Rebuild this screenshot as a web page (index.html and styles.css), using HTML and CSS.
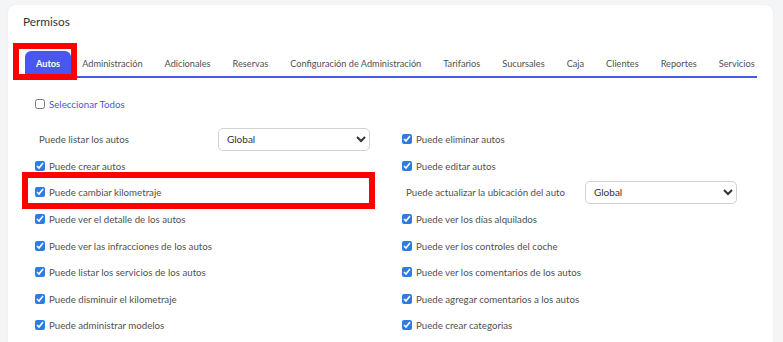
FILE: index.html
```html
<!DOCTYPE html>
<html lang="es">
<head>
    <meta charset="UTF-8">
    <title>Permisos</title>
    <link rel="stylesheet" href="styles.css">
</head>
<body>
    <div class="card">
        <h2 class="card-title">Permisos</h2>
        <ul class="tabs">
            <li class="tab active">Autos</li>
            <li class="tab">Administración</li>
            <li class="tab">Adicionales</li>
            <li class="tab">Reservas</li>
            <li class="tab">Configuración de Administración</li>
            <li class="tab">Tarifarios</li>
            <li class="tab">Sucursales</li>
            <li class="tab">Caja</li>
            <li class="tab">Clientes</li>
            <li class="tab">Reportes</li>
            <li class="tab">Servicios</li>
        </ul>

        <div class="tab-content">
            <label class="check select-all"><input type="checkbox"><span>Seleccionar Todos</span></label>

            <div class="perm-grid">
                <div class="perm select-row">
                    <span class="perm-label">Puede listar los autos</span>
                    <select><option>Global</option></select>
                </div>
                <label class="perm check"><input type="checkbox" checked><span>Puede eliminar autos</span></label>

                <label class="perm check"><input type="checkbox" checked><span>Puede crear autos</span></label>
                <label class="perm check"><input type="checkbox" checked><span>Puede editar autos</span></label>

                <label class="perm check"><input type="checkbox" checked><span>Puede cambiar kilometraje</span></label>
                <div class="perm select-row">
                    <span class="perm-label">Puede actualizar la ubicación del auto</span>
                    <select><option>Global</option></select>
                </div>

                <label class="perm check"><input type="checkbox" checked><span>Puede ver el detalle de los autos</span></label>
                <label class="perm check"><input type="checkbox" checked><span>Puede ver los días alquilados</span></label>

                <label class="perm check"><input type="checkbox" checked><span>Puede ver las infracciones de los autos</span></label>
                <label class="perm check"><input type="checkbox" checked><span>Puede ver los controles del coche</span></label>

                <label class="perm check"><input type="checkbox" checked><span>Puede listar los servicios de los autos</span></label>
                <label class="perm check"><input type="checkbox" checked><span>Puede ver los comentarios de los autos</span></label>

                <label class="perm check"><input type="checkbox" checked><span>Puede disminuir el kilometraje</span></label>
                <label class="perm check"><input type="checkbox" checked><span>Puede agregar comentarios a los autos</span></label>

                <label class="perm check"><input type="checkbox" checked><span>Puede administrar modelos</span></label>
                <label class="perm check"><input type="checkbox" checked><span>Puede crear categorias</span></label>
            </div>
        </div>
    </div>

    <!-- marcas de revisión -->
    <div class="mark mark-tab"></div>
    <div class="mark mark-row"></div>
</body>
</html>
```

FILE: styles.css
```css
html, body {
    height: 342px;
    overflow: hidden;
}
body {
    margin: 0;
    padding: 5px 10px 0 8px;
    background: #f4f5f7;
    font-family: 'Lato', 'Open Sans', Arial, sans-serif;
    color: #505050;
    position: relative;
    box-sizing: border-box;
}
.card {
    background: #fff;
    border-radius: 8px 8px 0 0;
    box-shadow: 0 0 3px rgba(0,0,0,0.04);
    padding: 9px 15px 0 15px;
    height: 337px;
    box-sizing: border-box;
}
.card-title {
    margin: 0 0 21px 0;
    font-size: 11.8px;
    font-weight: 400;
    color: #333;
    line-height: 16px;
}
.tabs {
    list-style: none;
    margin: 0 1px 0 2px;
    padding: 0;
    display: flex;
    border-bottom: 2px solid #4a57ee;
}
.tab {
    padding: 0 11px;
    height: 25px;
    line-height: 25px;
    font-size: 9.2px;
    color: #505050;
    white-space: nowrap;
}
.tab.active {
    background: #4a57ee;
    color: #fff;
    font-weight: 700;
    border-radius: 6px 6px 0 0;
}
.tab-content {
    padding: 18px 0 0 12px;
}
.check {
    display: flex;
    align-items: center;
    font-size: 9.7px;
    color: #505050;
}
.check input {
    width: 10px;
    height: 10px;
    margin: 0 4px 0 0;
    accent-color: #2b7de3;
}
.select-all {
    height: 16px;
}
.select-all span {
    color: #4a57d8;
}
.perm-grid {
    margin-top: 14px;
    display: grid;
    grid-template-columns: 367px 367px;
    grid-auto-rows: 26.6px;
    align-items: center;
}
.select-row {
    display: grid;
    grid-template-columns: 183px 152px;
    align-items: center;
    font-size: 9.7px;
    color: #505050;
}
.perm-label {
    padding-left: 4px;
}
select {
    height: 23px;
    border: 1px solid #cfd2d6;
    border-radius: 5px;
    background: #fff;
    font-family: inherit;
    font-size: 10px;
    color: #333;
    padding: 0 4px;
}
.mark {
    position: absolute;
    border: 6px solid #f00;
    box-sizing: border-box;
}
.mark-tab {
    left: 13px;
    top: 43px;
    width: 64px;
    height: 37px;
}
.mark-row {
    left: 22px;
    top: 172px;
    width: 353px;
    height: 37px;
}
```
